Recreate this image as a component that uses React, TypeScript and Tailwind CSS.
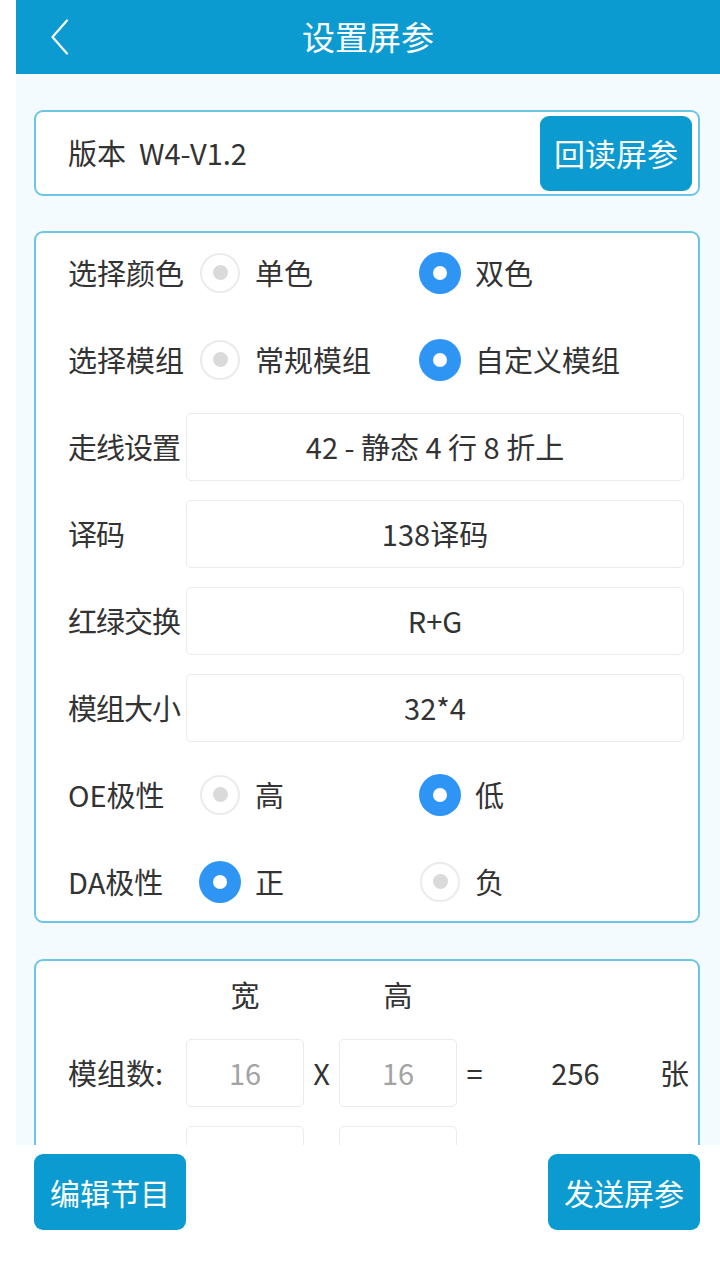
import React from "react";

const FONT = { fontFamily: '"Noto Sans CJK SC", "Noto Sans", sans-serif' };

function Radio({ on }: { on: boolean }) {
  if (on) {
    return (
      <div className="w-[42px] h-[42px] rounded-full bg-[#2f95f5] flex items-center justify-center shrink-0">
        <div className="w-[14px] h-[14px] rounded-full bg-white" />
      </div>
    );
  }
  return (
    <div className="w-[40px] h-[40px] rounded-full border-2 border-[#ebebeb] bg-white flex items-center justify-center shrink-0 mx-[1px]">
      <div className="w-[15px] h-[15px] rounded-full bg-[#dadada]" />
    </div>
  );
}

function RadioRow({ label, a, b, sel }: { label: string; a: string; b: string; sel: 0 | 1 }) {
  return (
    <div className="h-[87px] flex items-center">
      <div className="w-[118px] shrink-0 whitespace-nowrap">{label}</div>
      <div className="w-[220px] flex items-center pl-[13px]">
        <Radio on={sel === 0} />
        <span className="ml-[14px]">{a}</span>
      </div>
      <div className="flex items-center pl-[13px]">
        <Radio on={sel === 1} />
        <span className="ml-[14px]">{b}</span>
      </div>
    </div>
  );
}

function BoxRow({ label, value }: { label: string; value: string }) {
  return (
    <div className="h-[87px] flex items-center">
      <div className="w-[118px] shrink-0 whitespace-nowrap tracking-[-1px]">{label}</div>
      <div className="w-[498px] h-[68px] bg-white border border-[#ebebeb] rounded-[5px] flex items-center justify-center whitespace-pre">
        {value}
      </div>
    </div>
  );
}

export default function App() {
  return (
    <div className="w-[720px] h-[1280px] bg-white flex flex-col text-[#333] text-[29px] overflow-hidden" style={FONT}>
      {/* header */}
      <div className="ml-4 h-[74px] bg-[#0c9bd1] flex items-center relative shrink-0">
        <svg className="absolute left-[34px] top-[19px]" width="20" height="36" viewBox="0 0 20 36" fill="none">
          <path d="M17 1.5 L2.5 18 L17 34.5" stroke="white" strokeWidth="2.2" strokeLinecap="round" strokeLinejoin="round" />
        </svg>
        <div className="flex-1 text-center text-white text-[33px]">设置屏参</div>
      </div>

      {/* scroll area */}
      <div className="ml-4 h-[1071px] shrink-0 overflow-hidden bg-[#f4fbfe] pl-[18px] pr-[20px] pt-[36px]">
        {/* card 1 */}
        <div className="h-[86px] border-2 border-[#6cc4e6] rounded-[9px] bg-white flex items-center pl-[32px] pr-[6px]">
          <div className="flex-1 whitespace-pre">版本  W4-V1.2</div>
          <div className="w-[152px] h-[75px] rounded-[9px] bg-[#0c9bd1] text-white text-[31px] flex items-center justify-center">
            回读屏参
          </div>
        </div>

        {/* card 2 */}
        <div className="mt-[35px] h-[692px] border-2 border-[#6cc4e6] rounded-[9px] bg-white pl-[32px] flex flex-col justify-center">
          <div className="shrink-0">
            <RadioRow label="选择颜色" a="单色" b="双色" sel={1} />
            <RadioRow label="选择模组" a="常规模组" b="自定义模组" sel={1} />
            <BoxRow label="走线设置" value="42 - 静态 4 行 8 折上" />
            <BoxRow label="译码" value="138译码" />
            <BoxRow label="红绿交换" value="R+G" />
            <BoxRow label="模组大小" value="32*4" />
            <RadioRow label="OE极性" a="高" b="低" sel={1} />
            <RadioRow label="DA极性" a="正" b="负" sel={0} />
          </div>
        </div>

        {/* card 3 */}
        <div className="mt-[36px] border-2 border-[#6cc4e6] rounded-[9px] bg-white pl-[32px] pr-[9px] h-[400px]">
          <div className="h-[68px] flex items-center">
            <div className="w-[118px]" />
            <div className="w-[118px] text-center">宽</div>
            <div className="w-[35px]" />
            <div className="w-[118px] text-center">高</div>
          </div>
          <div className="h-[87px] flex items-center">
            <div className="w-[118px] shrink-0">模组数:</div>
            <div className="w-[118px] h-[68px] border border-[#ebebeb] rounded-[5px] flex items-center justify-center text-[#a3a3a3]">16</div>
            <div className="w-[35px] text-center">X</div>
            <div className="w-[118px] h-[68px] border border-[#ebebeb] rounded-[5px] flex items-center justify-center text-[#a3a3a3]">16</div>
            <div className="w-[35px] text-center">=</div>
            <div className="flex-1 text-center">256</div>
            <div className="w-[30px] text-right">张</div>
          </div>
          <div className="h-[87px] flex items-center">
            <div className="w-[118px] shrink-0">总像素:</div>
            <div className="w-[118px] h-[68px] border border-[#ebebeb] rounded-[5px]" />
            <div className="w-[35px]" />
            <div className="w-[118px] h-[68px] border border-[#ebebeb] rounded-[5px]" />
            <div className="w-[35px]" />
            <div className="flex-1" />
            <div className="w-[30px] text-right">点</div>
          </div>
        </div>
      </div>

      {/* bottom buttons */}
      <div className="flex justify-between pl-[34px] pr-[20px] pt-[9px]">
        <div className="w-[152px] h-[76px] rounded-[9px] bg-[#0c9bd1] text-white text-[30px] flex items-center justify-center">
          编辑节目
        </div>
        <div className="w-[152px] h-[76px] rounded-[9px] bg-[#0c9bd1] text-white text-[30px] flex items-center justify-center">
          发送屏参
        </div>
      </div>
    </div>
  );
}
